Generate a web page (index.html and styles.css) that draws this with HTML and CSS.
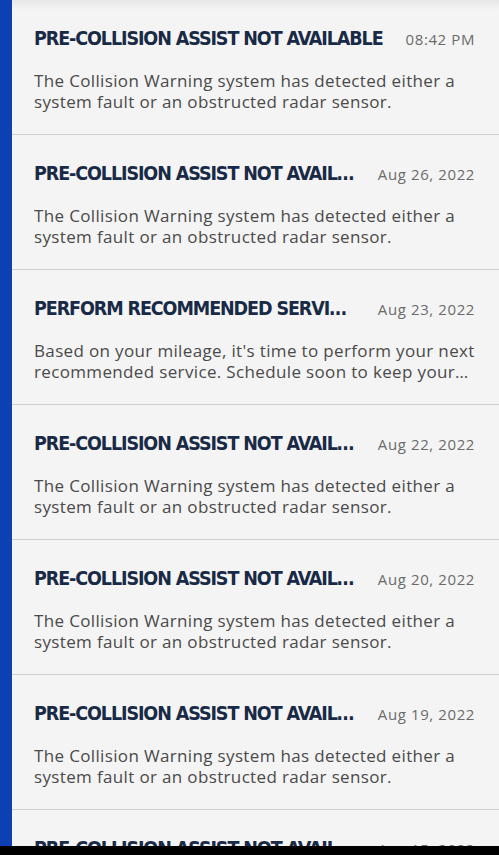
FILE: index.html
```html
<!DOCTYPE html>
<html lang="en">
<head>
    <meta charset="UTF-8">
    <meta name="viewport" content="width=device-width, initial-scale=1.0">
    <title>Messages</title>
    <link rel="stylesheet" href="styles.css">
</head>
<body>
    <div class="screen">
        <div class="accent"></div>
        <ul class="messages">
            <li class="message">
                <div class="message-head">
                    <h2 class="message-title">PRE-COLLISION ASSIST NOT AVAILABLE</h2>
                    <span class="message-date">08:42 PM</span>
                </div>
                <p class="message-body">The Collision Warning system has detected either a system fault or an obstructed radar sensor.</p>
            </li>
            <li class="message">
                <div class="message-head">
                    <h2 class="message-title">PRE-COLLISION ASSIST NOT AVAILABLE</h2>
                    <span class="message-date">Aug 26, 2022</span>
                </div>
                <p class="message-body">The Collision Warning system has detected either a system fault or an obstructed radar sensor.</p>
            </li>
            <li class="message">
                <div class="message-head">
                    <h2 class="message-title">PERFORM RECOMMENDED SERVICE SOON</h2>
                    <span class="message-date">Aug 23, 2022</span>
                </div>
                <p class="message-body">Based on your mileage, it's time to perform your next recommended service. Schedule soon to keep your vehicle running at its best.</p>
            </li>
            <li class="message">
                <div class="message-head">
                    <h2 class="message-title">PRE-COLLISION ASSIST NOT AVAILABLE</h2>
                    <span class="message-date">Aug 22, 2022</span>
                </div>
                <p class="message-body">The Collision Warning system has detected either a system fault or an obstructed radar sensor.</p>
            </li>
            <li class="message">
                <div class="message-head">
                    <h2 class="message-title">PRE-COLLISION ASSIST NOT AVAILABLE</h2>
                    <span class="message-date">Aug 20, 2022</span>
                </div>
                <p class="message-body">The Collision Warning system has detected either a system fault or an obstructed radar sensor.</p>
            </li>
            <li class="message">
                <div class="message-head">
                    <h2 class="message-title">PRE-COLLISION ASSIST NOT AVAILABLE</h2>
                    <span class="message-date">Aug 19, 2022</span>
                </div>
                <p class="message-body">The Collision Warning system has detected either a system fault or an obstructed radar sensor.</p>
            </li>
            <li class="message">
                <div class="message-head">
                    <h2 class="message-title">PRE-COLLISION ASSIST NOT AVAILABLE</h2>
                    <span class="message-date">Aug 15, 2022</span>
                </div>
                <p class="message-body">The Collision Warning system has detected either a system fault or an obstructed radar sensor.</p>
            </li>
        </ul>
    </div>
    <div class="nav-bar"></div>
</body>
</html>
```

FILE: styles.css
```css
html, body {
    height: 100%;
}
body {
    margin: 0;
    display: flex;
    flex-direction: column;
    background-color: #f4f4f4;
    font-family: 'Open Sans', 'Liberation Sans', sans-serif;
    overflow: hidden;
}
.screen {
    flex: 1;
    display: flex;
    min-height: 0;
    overflow: hidden;
}
.accent {
    width: 12px;
    flex-shrink: 0;
    background-color: #0e40b4;
}
.messages {
    flex: 1;
    min-width: 0;
    list-style: none;
    margin: 0;
    padding: 0;
    background: linear-gradient(#e6e6e6, #f4f4f4 10px);
}
.message {
    height: 134px;
    padding: 0 24px 0 22px;
    border-bottom: 1px solid #cfcfcf;
}
.message-head {
    display: flex;
    align-items: center;
    gap: 20px;
    padding-top: 27px;
}
.message-title {
    flex: 1;
    min-width: 0;
    margin: 0;
    font-family: 'DejaVu Sans Condensed', sans-serif;
    font-weight: bold;
    font-size: 19.5px;
    line-height: 24px;
    letter-spacing: -1.1px;
    color: #192a46;
    white-space: nowrap;
    overflow: hidden;
    text-overflow: ellipsis;
}
.message-date {
    flex-shrink: 0;
    font-size: 15px;
    letter-spacing: 0.6px;
    color: #6b6b6b;
}
.message-body {
    margin: 19px 0 0;
    font-size: 17px;
    line-height: 21px;
    letter-spacing: 0.35px;
    color: #4a4a4a;
    display: -webkit-box;
    -webkit-box-orient: vertical;
    -webkit-line-clamp: 2;
    overflow: hidden;
}
.nav-bar {
    height: 9px;
    flex-shrink: 0;
    background-color: #000;
}
```
